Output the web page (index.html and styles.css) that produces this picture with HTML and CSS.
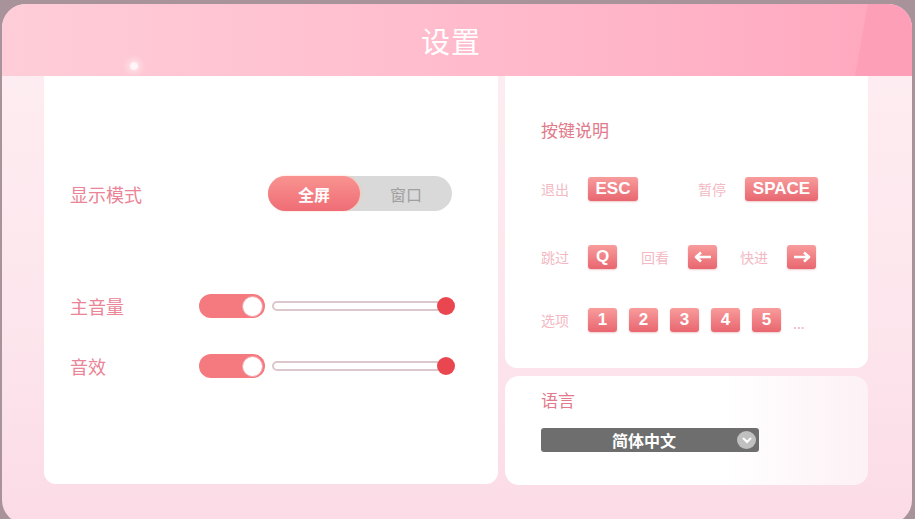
FILE: index.html
```html
<!DOCTYPE html>
<html lang="zh-CN">
  <head>
    <meta charset="UTF-8" />
    <meta name="viewport" content="width=device-width, initial-scale=1.0" />
    <title>设置</title>
    <link rel="stylesheet" href="styles.css">
  </head>
  <body>
    <div class="panel">
      <div class="header">
        <h1 class="title">设置</h1>
        <span class="sparkle"></span>
      </div>
      <div class="content">
        <div class="card card-main">
          <div class="row row-mode">
            <span class="label label-wide">显示模式</span>
            <div class="segment">
              <span class="seg seg-on">全屏</span>
              <span class="seg seg-off">窗口</span>
            </div>
          </div>
          <div class="row row-volume">
            <span class="label label-narrow">主音量</span>
            <span class="switch"><span class="knob"></span></span>
            <div class="slider">
              <span class="track"></span>
              <span class="thumb"></span>
            </div>
          </div>
          <div class="row row-effect">
            <span class="label label-narrow">音效</span>
            <span class="switch"><span class="knob"></span></span>
            <div class="slider">
              <span class="track"></span>
              <span class="thumb"></span>
            </div>
          </div>
        </div>

        <div class="side">
          <div class="card card-keys">
            <h2 class="card-title">按键说明</h2>
            <div class="keyrow keyrow-1">
              <span class="klabel">退出</span>
              <span class="key key-esc">ESC</span>
              <span class="klabel gap-60">暂停</span>
              <span class="key key-space">SPACE</span>
            </div>
            <div class="keyrow keyrow-2">
              <span class="klabel">跳过</span>
              <span class="key">Q</span>
              <span class="klabel gap-24">回看</span>
              <span class="key">
                <svg width="18" height="12" viewBox="0 0 18 12"><path d="M17 6H3M7 1.5L2 6l5 4.5" fill="none" stroke="#fff" stroke-width="2.6" stroke-linejoin="round"/></svg>
              </span>
              <span class="klabel gap-23">快进</span>
              <span class="key">
                <svg width="18" height="12" viewBox="0 0 18 12"><path d="M1 6h14M11 1.5L16 6l-5 4.5" fill="none" stroke="#fff" stroke-width="2.6" stroke-linejoin="round"/></svg>
              </span>
            </div>
            <div class="keyrow keyrow-3">
              <span class="klabel">选项</span>
              <span class="key">1</span>
              <span class="key">2</span>
              <span class="key">3</span>
              <span class="key">4</span>
              <span class="key">5</span>
              <span class="more">...</span>
            </div>
          </div>
          <div class="card card-lang">
            <h2 class="card-title">语言</h2>
            <div class="select">
              <span class="select-text">简体中文</span>
              <span class="chevron">
                <svg width="10" height="7" viewBox="0 0 10 7"><path d="M1.5 1.5L5 5l3.5-3.5" fill="none" stroke="#fff" stroke-width="2" stroke-linecap="round"/></svg>
              </span>
            </div>
          </div>
        </div>
      </div>
    </div>
  </body>
</html>
```

FILE: styles.css
```css
* {
  box-sizing: border-box;
}

body {
  margin: 0;
  height: 519px;
  overflow: hidden;
  background: #a8939b;
  font-family: "Noto Sans CJK SC", "Noto Sans", sans-serif;
}

.panel {
  margin: 4px 3px 0 2px;
  height: 520px;
  border-radius: 24px;
  overflow: hidden;
  background: linear-gradient(180deg, #fdeef2 0%, #fde6ed 60%, #fbdbe6 100%);
}

.header {
  position: relative;
  height: 72px;
  display: flex;
  align-items: center;
  justify-content: center;
  padding-right: 12px;
  background: linear-gradient(90deg, #fecdd7 0%, #ffbfcf 40%, #ffb2c6 75%, #ffa9bf 95%);
}

.header::after {
  content: "";
  position: absolute;
  top: 0;
  right: 0;
  width: 70px;
  height: 100%;
  background: linear-gradient(100deg, rgba(255, 255, 255, 0) 30%, rgba(250, 140, 170, 0.35) 32%);
}

.sparkle {
  position: absolute;
  left: 128px;
  top: 58px;
  width: 8px;
  height: 8px;
  border-radius: 50%;
  background: rgba(255, 255, 255, 0.8);
  box-shadow: 0 0 6px 3px rgba(255, 255, 255, 0.5);
}

.title {
  margin: 0;
  color: #fff;
  font-size: 29px;
  font-weight: 400;
  letter-spacing: 1px;
}

.content {
  display: flex;
  gap: 7px;
  padding: 0 44px 0 42px;
}

.card {
  background: #fff;
  border-radius: 0 0 12px 12px;
}

.card-main {
  width: 454px;
  height: 408px;
  padding: 100px 0 0 26px;
}

.row {
  display: flex;
  align-items: center;
}

.label {
  color: #ea8496;
  font-size: 18px;
}

.label-wide {
  width: 198px;
}

.label-narrow {
  width: 129px;
}

.segment {
  display: flex;
  width: 184px;
  height: 35px;
  border-radius: 18px;
  background: #d9d9d9;
}

.seg {
  display: flex;
  align-items: center;
  justify-content: center;
  font-size: 16px;
}

.seg-on {
  width: 92px;
  border-radius: 18px;
  color: #fff;
  font-weight: 700;
  background: linear-gradient(180deg, #f99390 0%, #ef6d76 100%);
  box-shadow: 1px 0 2px rgba(255, 200, 170, 0.9);
}

.seg-off {
  flex: 1;
  color: #a0a0a0;
}

.row-volume {
  margin-top: 82px;
}

.row-effect {
  margin-top: 34px;
}

.switch {
  display: flex;
  align-items: center;
  justify-content: flex-end;
  width: 66px;
  height: 24px;
  padding-right: 2px;
  border-radius: 12px;
  background: #f57a80;
}

.knob {
  width: 21px;
  height: 21px;
  border-radius: 50%;
  background: #fff;
  border: 1px solid #f5a0a5;
}

.slider {
  position: relative;
  width: 183px;
  height: 18px;
  margin-left: 7px;
}

.track {
  position: absolute;
  left: 0;
  right: 8px;
  top: 4px;
  height: 10px;
  border-radius: 5px;
  background: #fff;
  border: 2px solid #dcc8cc;
}

.thumb {
  position: absolute;
  right: 0;
  top: 0;
  width: 18px;
  height: 18px;
  border-radius: 50%;
  background: #ea4650;
}

.side {
  display: flex;
  flex-direction: column;
  gap: 8px;
  width: 363px;
}

.card-keys {
  height: 292px;
  padding: 42px 0 0 36px;
}

.card-title {
  margin: 0;
  color: #e27a8b;
  font-size: 17px;
  font-weight: 400;
  line-height: 24px;
}

.keyrow {
  display: flex;
  align-items: center;
  height: 24px;
}

.keyrow-1 {
  margin-top: 35px;
}

.keyrow-2 {
  margin-top: 44px;
}

.keyrow-3 {
  margin-top: 39px;
  gap: 12px;
}

.keyrow-3 .klabel {
  margin-right: -12px;
}

.klabel {
  width: 47px;
  color: #f3b9c3;
  font-size: 14px;
}

.gap-60 {
  margin-left: 60px;
}

.gap-24 {
  margin-left: 24px;
}

.gap-23 {
  margin-left: 23px;
}

.key {
  display: flex;
  align-items: center;
  justify-content: center;
  min-width: 29px;
  height: 24px;
  padding: 0 4px;
  border-radius: 3px;
  color: #fff;
  font-family: "Liberation Sans", Arial, sans-serif;
  font-size: 17px;
  font-weight: 700;
  background: linear-gradient(180deg, #f89c9c 0%, #e8666f 100%);
  box-shadow: 0 1px 2px rgba(200, 80, 90, 0.3);
}

.key-esc {
  width: 50px;
}

.key-space {
  width: 73px;
}

.more {
  color: #f0b3bd;
  font-size: 14px;
  margin-top: 6px;
}

.card-lang {
  height: 109px;
  border-radius: 14px;
  padding: 12px 0 0 36px;
  background: linear-gradient(90deg, #fff 0%, #fff 60%, #fdf1f5 100%);
}

.select {
  position: relative;
  display: flex;
  align-items: center;
  justify-content: center;
  width: 218px;
  height: 24px;
  margin-top: 16px;
  padding-right: 12px;
  border-radius: 3px;
  background: #6e6e6e;
}

.select-text {
  color: #fff;
  font-size: 16px;
  font-weight: 700;
}

.chevron {
  position: absolute;
  right: 3px;
  top: 3px;
  display: flex;
  align-items: center;
  justify-content: center;
  width: 19px;
  height: 18px;
  border-radius: 50%;
  background: #c0c0c0;
}
```
